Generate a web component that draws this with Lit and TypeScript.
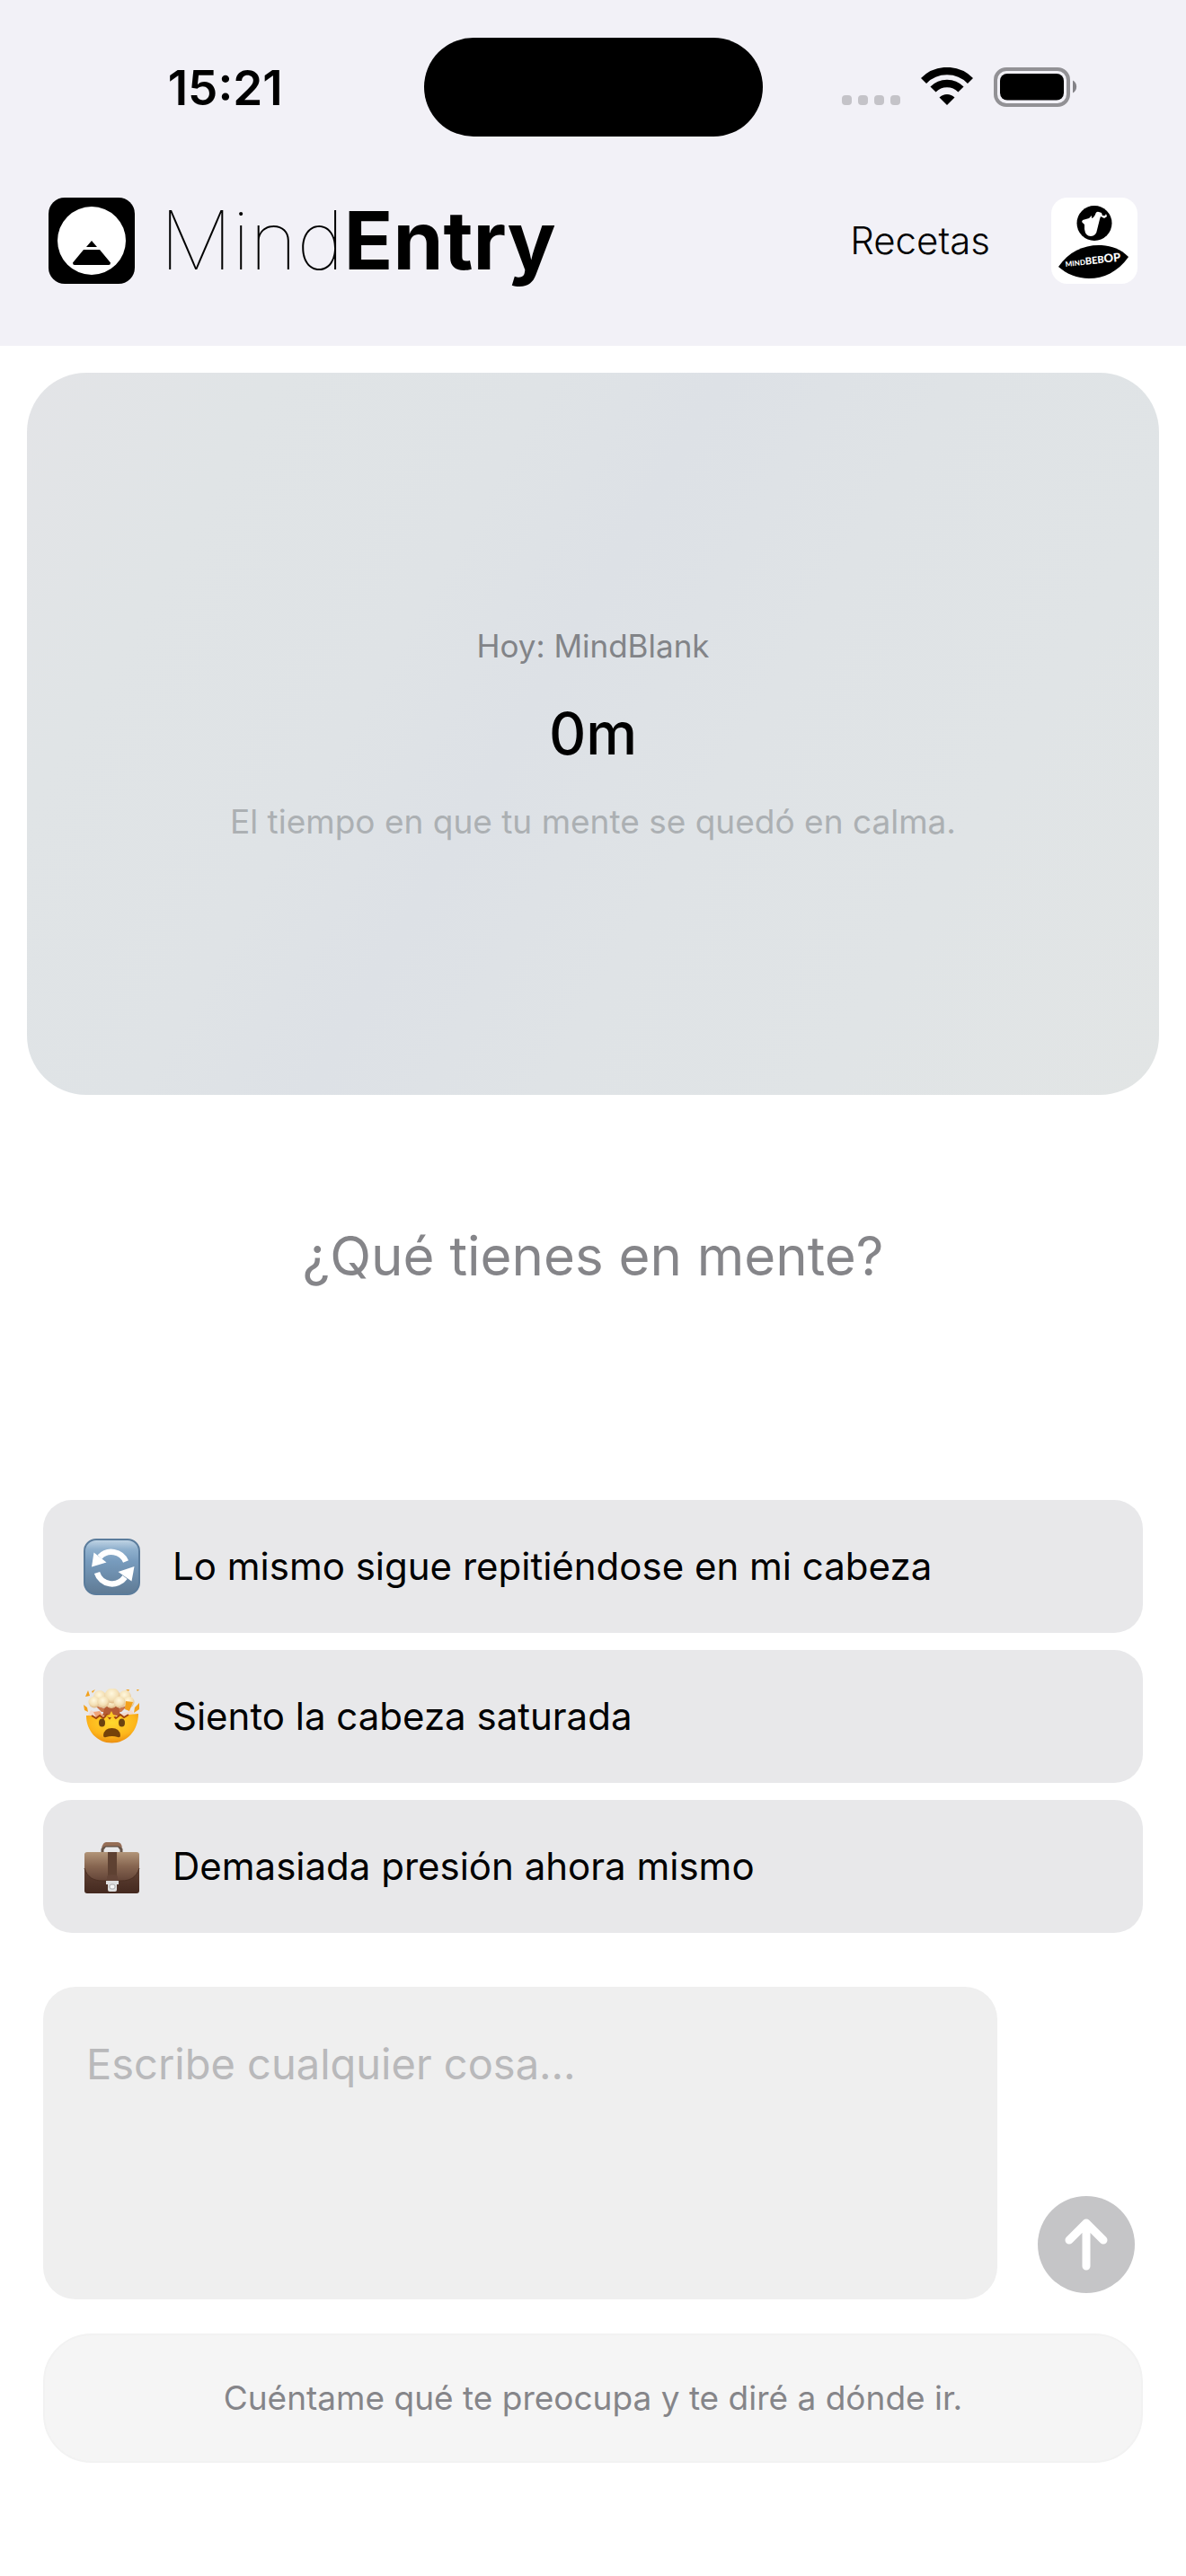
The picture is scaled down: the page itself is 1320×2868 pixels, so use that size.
import { css, html, LitElement, svg } from "lit";
import { customElement, property, state } from "lit/decorators.js";

type PromptIcon = "repeat" | "mindblown" | "briefcase";

interface Prompt {
  icon: PromptIcon;
  text: string;
}

const PROMPTS: Prompt[] = [
  { icon: "repeat", text: "Lo mismo sigue repitiéndose en mi cabeza" },
  { icon: "mindblown", text: "Siento la cabeza saturada" },
  { icon: "briefcase", text: "Demasiada presión ahora mismo" },
];

const repeatIcon = svg`
  <defs>
    <linearGradient id="tile" x1="0" y1="0" x2="0" y2="1">
      <stop offset="0" stop-color="#c3d6e6" />
      <stop offset="0.18" stop-color="#8fb0cd" />
      <stop offset="0.4" stop-color="#779bbd" />
      <stop offset="1" stop-color="#5f7a94" />
    </linearGradient>
  </defs>
  <rect x="1" y="1" width="61" height="61" rx="13" fill="url(#tile)" stroke="#5b7c9c" stroke-width="2" />
  <path d="M47 25.500A17.500 17.500 0 0 0 18 20.500" fill="none" stroke="#fff" stroke-width="6.500" />
  <path d="M9 31.500L11.500 15.500L25.500 26.500Z" fill="#fff" />
  <path d="M15 38A17.500 17.500 0 0 0 46 43" fill="none" stroke="#fff" stroke-width="6.500" />
  <path d="M56.500 31L53.500 47.500L38.500 37Z" fill="#fff" />
`;

const mindblownIcon = svg`
  <defs>
    <radialGradient id="face" cx="0.5" cy="0.3" r="0.75">
      <stop offset="0" stop-color="#ffd92e" />
      <stop offset="0.6" stop-color="#fdb61c" />
      <stop offset="1" stop-color="#e8860f" />
    </radialGradient>
    <radialGradient id="puff" cx="0.45" cy="0.35" r="0.7">
      <stop offset="0" stop-color="#fff8de" />
      <stop offset="0.6" stop-color="#f3dfb4" />
      <stop offset="1" stop-color="#d9ae7a" />
    </radialGradient>
  </defs>
  <path d="M8 24q23 10 46 0l2 5-9 4H14l-9-3z" fill="#f3d9cc" />
  <path d="M12 18q19 9 38 0l-8 8H20z" fill="#c9764a" />
  <path d="M24 20h15l2 10H21z" fill="#b45c35" />
  <path d="M11 26l7-1 4 6-8 1z" fill="#f0a377" />
  <path
    d="M3 30l7 0 4 3 4-3 4 3 4-4 3 4 3-4 4 4 5-4 4 3 5-3 11-1C61 47 48 60.500 31.500 60.500S3 47 3 30z"
    fill="url(#face)"
  />
  <path
    d="M9 30l5 3 4-3 4 3 4-4 3 4 3-4 4 4 5-4 4 3 5-3"
    fill="none"
    stroke="#a2460f"
    stroke-width="2"
  />
  <g fill="url(#puff)">
    <circle cx="31" cy="16" r="6" />
    <circle cx="18" cy="9" r="7" />
    <circle cx="46" cy="9" r="7" />
    <circle cx="12" cy="15" r="6.500" />
    <circle cx="50" cy="15" r="6.500" />
    <circle cx="32" cy="8" r="8.500" />
    <circle cx="22" cy="15" r="6.500" />
    <circle cx="40" cy="15" r="6.500" />
  </g>
  <path
    d="M47 14l8 1-4 10-5-2zM57 21l5-5 0 7-6 4zM0 18l4 3 1 5-4-2zM2 9l3-7 2 6zM9 3l4-2-3 4zM47 1l4 0-1 2zM59 1l3 0-2 2z"
    fill="#f3a11b"
  />
  <path d="M28 32l-3-2 4-1 2-4 2 4 4 1-4 2z" fill="#ffcb25" />
  <ellipse cx="20.500" cy="38" rx="3.500" ry="4.500" fill="#6b4210" />
  <ellipse cx="42.500" cy="38" rx="3.500" ry="4.500" fill="#6b4210" />
  <path d="M22 52q1-8 9.500-8t9.500 8q0 3-3 2-6-2-13 0-3 1-3-2z" fill="#764209" />
`;

const briefcaseIcon = svg`
  <defs>
    <linearGradient id="flap" x1="0" y1="0" x2="0" y2="1">
      <stop offset="0" stop-color="#b29579" />
      <stop offset="0.5" stop-color="#866550" />
      <stop offset="1" stop-color="#644538" />
    </linearGradient>
    <linearGradient id="body" x1="0" y1="0" x2="0" y2="1">
      <stop offset="0" stop-color="#725142" />
      <stop offset="1" stop-color="#44291f" />
    </linearGradient>
  </defs>
  <path d="M21 17v-5l3-4h15l3 4v5" fill="none" stroke="#685549" stroke-width="3" />
  <path d="M20 10q2-6 5-6h13q4 0 5 6l-5-2H25z" fill="#956d55" />
  <rect x="1" y="16" width="61" height="45" rx="3" fill="url(#body)" />
  <path d="M1 18q0-3 3-3h55q3 0 3 3v15c-3 10-10 14-20 14H21C11 47 4 43 1 33z" fill="url(#flap)" />
  <path d="M1 33c3 10 10 14 20 14h21c10 0 17-4 20-14" fill="none" stroke="#4c3023" stroke-width="1" />
  <rect x="27" y="15" width="10" height="26" fill="#5e4132" />
  <path d="M26 47v-4q0-3 6-3t6 3v4z" fill="#644538" />
  <path d="M25 47h14v4h-2v6q0 2-2 2h-6q-2 0-2-2v-6h-2z" fill="#dedede" />
  <rect x="29" y="51" width="6" height="5" rx="2" fill="#f7f7f7" stroke="#aaa" />
`;

const ICONS = {
  repeat: repeatIcon,
  mindblown: mindblownIcon,
  briefcase: briefcaseIcon,
};

@customElement("status-bar")
export class StatusBar extends LitElement {
  static styles = css`
    :host {
      display: grid;
      grid-template-columns: 1fr 377px 1fr;
      align-items: center;
      padding: 42px 0 0;
    }

    .time {
      font-size: 53px;
      line-height: 64px;
      font-weight: 600;
      text-align: center;
      padding: 2px 0 0 30px;
    }

    .island {
      height: 110px;
      border-radius: 55px;
      background-color: #000;
    }

    .indicators {
      display: flex;
      align-items: center;
      justify-content: center;
      gap: 23px;
      padding-right: 32px;
    }
  `;

  render() {
    return html`
      <div class="time">15:21</div>
      <div class="island"></div>
      <div class="indicators">
        <svg width="65" height="44" viewBox="0 0 65 44" fill="#c4c3c8">
          <rect x="0" y="31" width="11" height="11" rx="4" />
          <rect x="18" y="31" width="11" height="11" rx="4" />
          <rect x="36" y="31" width="11" height="11" rx="4" />
          <rect x="54" y="31" width="11" height="11" rx="4" />
        </svg>
        <svg width="58" height="44" viewBox="0 0 58 44">
          <path d="M29 42L20.500 33.500A12 12 0 0 1 37.500 33.500Z" />
          <path
            d="M13.500 24.500A21.500 21.500 0 0 1 44.500 24.500M3 15A36.500 36.500 0 0 1 55 15"
            fill="none"
            stroke="#000"
            stroke-width="8.500"
          />
        </svg>
        <svg width="94" height="44" viewBox="0 0 94 44">
          <rect x="2" y="2" width="81" height="40" rx="12" fill="none" stroke="#929195" stroke-width="4" />
          <rect x="7" y="7" width="71" height="29.500" rx="8" />
          <path d="M88 14.500a8 8 0 0 1 0 14z" fill="#848388" />
        </svg>
      </div>
    `;
  }
}

@customElement("app-header")
export class AppHeader extends LitElement {
  static styles = css`
    :host {
      display: flex;
      align-items: center;
      padding: 68px 54px 69px;
    }

    .logo {
      display: block;
    }

    .title {
      margin: 0 auto 0 28px;
      font-size: 90px;
      line-height: 96px;
      font-weight: 100;
    }

    .title strong {
      font-weight: 700;
    }

    .recipes {
      margin-right: 68px;
      color: #000;
      font-size: 42px;
      line-height: 56px;
      font-weight: 300;
      text-decoration: none;
    }

    .profile {
      display: block;
      padding: 0;
      border: none;
      background: none;
      cursor: pointer;
    }

    .profile svg {
      display: block;
    }

    .brand {
      font-family: Lato, sans-serif;
      font-weight: 900;
    }
  `;

  render() {
    return html`
      <svg class="logo" width="96" height="96" viewBox="0 0 96 96">
        <rect width="96" height="96" rx="18" />
        <circle cx="48" cy="48" r="38" fill="#fff" />
        <path d="M48 48l6 7H42zM39 58h18l12 14.500q0 2.500-2 2.500H29q-2 0-2-2.500z" />
      </svg>
      <div class="title">Mind<strong>Entry</strong></div>
      <a class="recipes" href="#recetas">Recetas</a>
      <button class="profile" aria-label="MindBebop">
        <svg width="96" height="96" viewBox="0 0 96 96">
          <rect width="96" height="96" rx="18" fill="#fff" />
          <circle cx="48" cy="28.500" r="19.500" />
          <path
            d="M49 19q1-4 4-3l3 1 1 3 3 0 1-2 1 3-3 2-4-2-1 3-3 12q-1 7-7 7-6 0-7-8l0-5-3-3 1-2 7-2 3-3 0 3 2-1z"
            fill="#fff"
          />
          <path d="M8 77C20 59 38 52 56 53C68 54 77 57 86 66C74 83 58 90 42 90C29 90 17 85 8 77Z" />
          <text class="brand" x="16" y="77" fill="#fff" transform="rotate(-6 16 77)">
            <tspan font-size="8">MIND</tspan><tspan font-size="11">BEB</tspan><tspan font-size="13">OP</tspan>
          </text>
        </svg>
      </button>
    `;
  }
}

@customElement("prompt-button")
export class PromptButton extends LitElement {
  static styles = css`
    :host {
      display: block;
    }

    button {
      display: flex;
      align-items: center;
      gap: 36px;
      width: 100%;
      padding: 43px 45px;
      border: none;
      border-radius: 32px;
      background-color: #e8e8ea;
      color: #000;
      font: inherit;
      font-size: 42px;
      line-height: 62px;
      text-align: left;
      cursor: pointer;
    }

    svg {
      flex: none;
      margin: -1px 0;
    }
  `;

  @property() icon: PromptIcon = "repeat";

  render() {
    return html`
      <button>
        <svg width="63" height="63" viewBox="0 0 63 63" aria-hidden="true">${ICONS[this.icon]}</svg>
        <span><slot></slot></span>
      </button>
    `;
  }
}

@customElement("app-root")
export class AppRoot extends LitElement {
  static styles = css`
    :host {
      display: block;
      min-height: 100vh;
      box-sizing: border-box;
      background-color: #fff;
      color: #000;
      font-family: Inter, "Liberation Sans", sans-serif;
    }

    .top {
      background-color: #f2f1f7;
    }

    .summary {
      display: flex;
      flex-direction: column;
      align-items: center;
      gap: 24px;
      margin: 30px 30px 0;
      padding: 278px 40px;
      border-radius: 66px;
      background-image: linear-gradient(
        120deg,
        #e3e4e7 0%,
        #e0e4e6 16%,
        #dfe3e6 34%,
        #dde1e6 45%,
        #dfe3e6 60%,
        #e0e4e6 78%,
        #e2e5e5 100%
      );
      text-align: center;
    }

    .summary-label {
      color: #828488;
      font-size: 35px;
      line-height: 52px;
    }

    .summary-value {
      font-size: 64px;
      line-height: 96px;
      font-weight: 500;
    }

    .summary-note {
      color: #acb0b3;
      font-size: 37px;
      line-height: 52px;
    }

    .question {
      margin: 0;
      padding: 135px 40px 228px;
      color: #858589;
      font-size: 60px;
      line-height: 88px;
      font-weight: 400;
      text-align: center;
    }

    .content {
      padding: 0 48px 60px;
    }

    .prompts {
      display: flex;
      flex-direction: column;
      gap: 19px;
    }

    .composer {
      display: flex;
      align-items: flex-end;
      gap: 45px;
      margin: 60px 9px 38px 0;
    }

    textarea {
      flex: 1;
      min-width: 0;
      height: 348px;
      box-sizing: border-box;
      padding: 54px 48px;
      border: none;
      border-radius: 36px;
      background-color: #efefef;
      color: #000;
      font: inherit;
      font-size: 47px;
      line-height: 64px;
      resize: none;
      outline: none;
    }

    textarea::placeholder {
      color: #b9b9bb;
    }

    .send {
      display: flex;
      flex: none;
      margin-bottom: 7px;
      padding: 0;
      border: none;
      border-radius: 50%;
      background-color: #c5c5c7;
      cursor: pointer;
    }

    .hint {
      margin: 0;
      padding: 44px 40px;
      border: 2px solid #f2f2f2;
      border-radius: 54px;
      background-color: #f5f5f5;
      color: #858589;
      font-size: 37px;
      line-height: 52px;
      text-align: center;
    }
  `;

  @state() private _draft = "";

  private _handleInput(e: InputEvent) {
    this._draft = (e.target as HTMLTextAreaElement).value;
  }

  private _handleSend() {
    this._draft = "";
  }

  render() {
    return html`
      <header class="top">
        <status-bar></status-bar>
        <app-header></app-header>
      </header>
      <main>
        <section class="summary">
          <div class="summary-label">Hoy: MindBlank</div>
          <div class="summary-value">0m</div>
          <div class="summary-note">El tiempo en que tu mente se quedó en calma.</div>
        </section>
        <h1 class="question">¿Qué tienes en mente?</h1>
        <div class="content">
          <div class="prompts">
            ${PROMPTS.map((p) => html`<prompt-button .icon=${p.icon}>${p.text}</prompt-button>`)}
          </div>
          <div class="composer">
            <textarea
              aria-label="Escribe cualquier cosa"
              placeholder="Escribe cualquier cosa..."
              .value=${this._draft}
              @input=${this._handleInput}
            ></textarea>
            <button class="send" aria-label="Enviar" @click=${this._handleSend}>
              <svg width="108" height="108" viewBox="0 0 108 108">
                <path
                  d="M54 78V31M35 49L54 30L73 49"
                  fill="none"
                  stroke="#fff"
                  stroke-width="9"
                  stroke-linecap="round"
                  stroke-linejoin="round"
                />
              </svg>
            </button>
          </div>
          <p class="hint">Cuéntame qué te preocupa y te diré a dónde ir.</p>
        </div>
      </main>
    `;
  }
}
